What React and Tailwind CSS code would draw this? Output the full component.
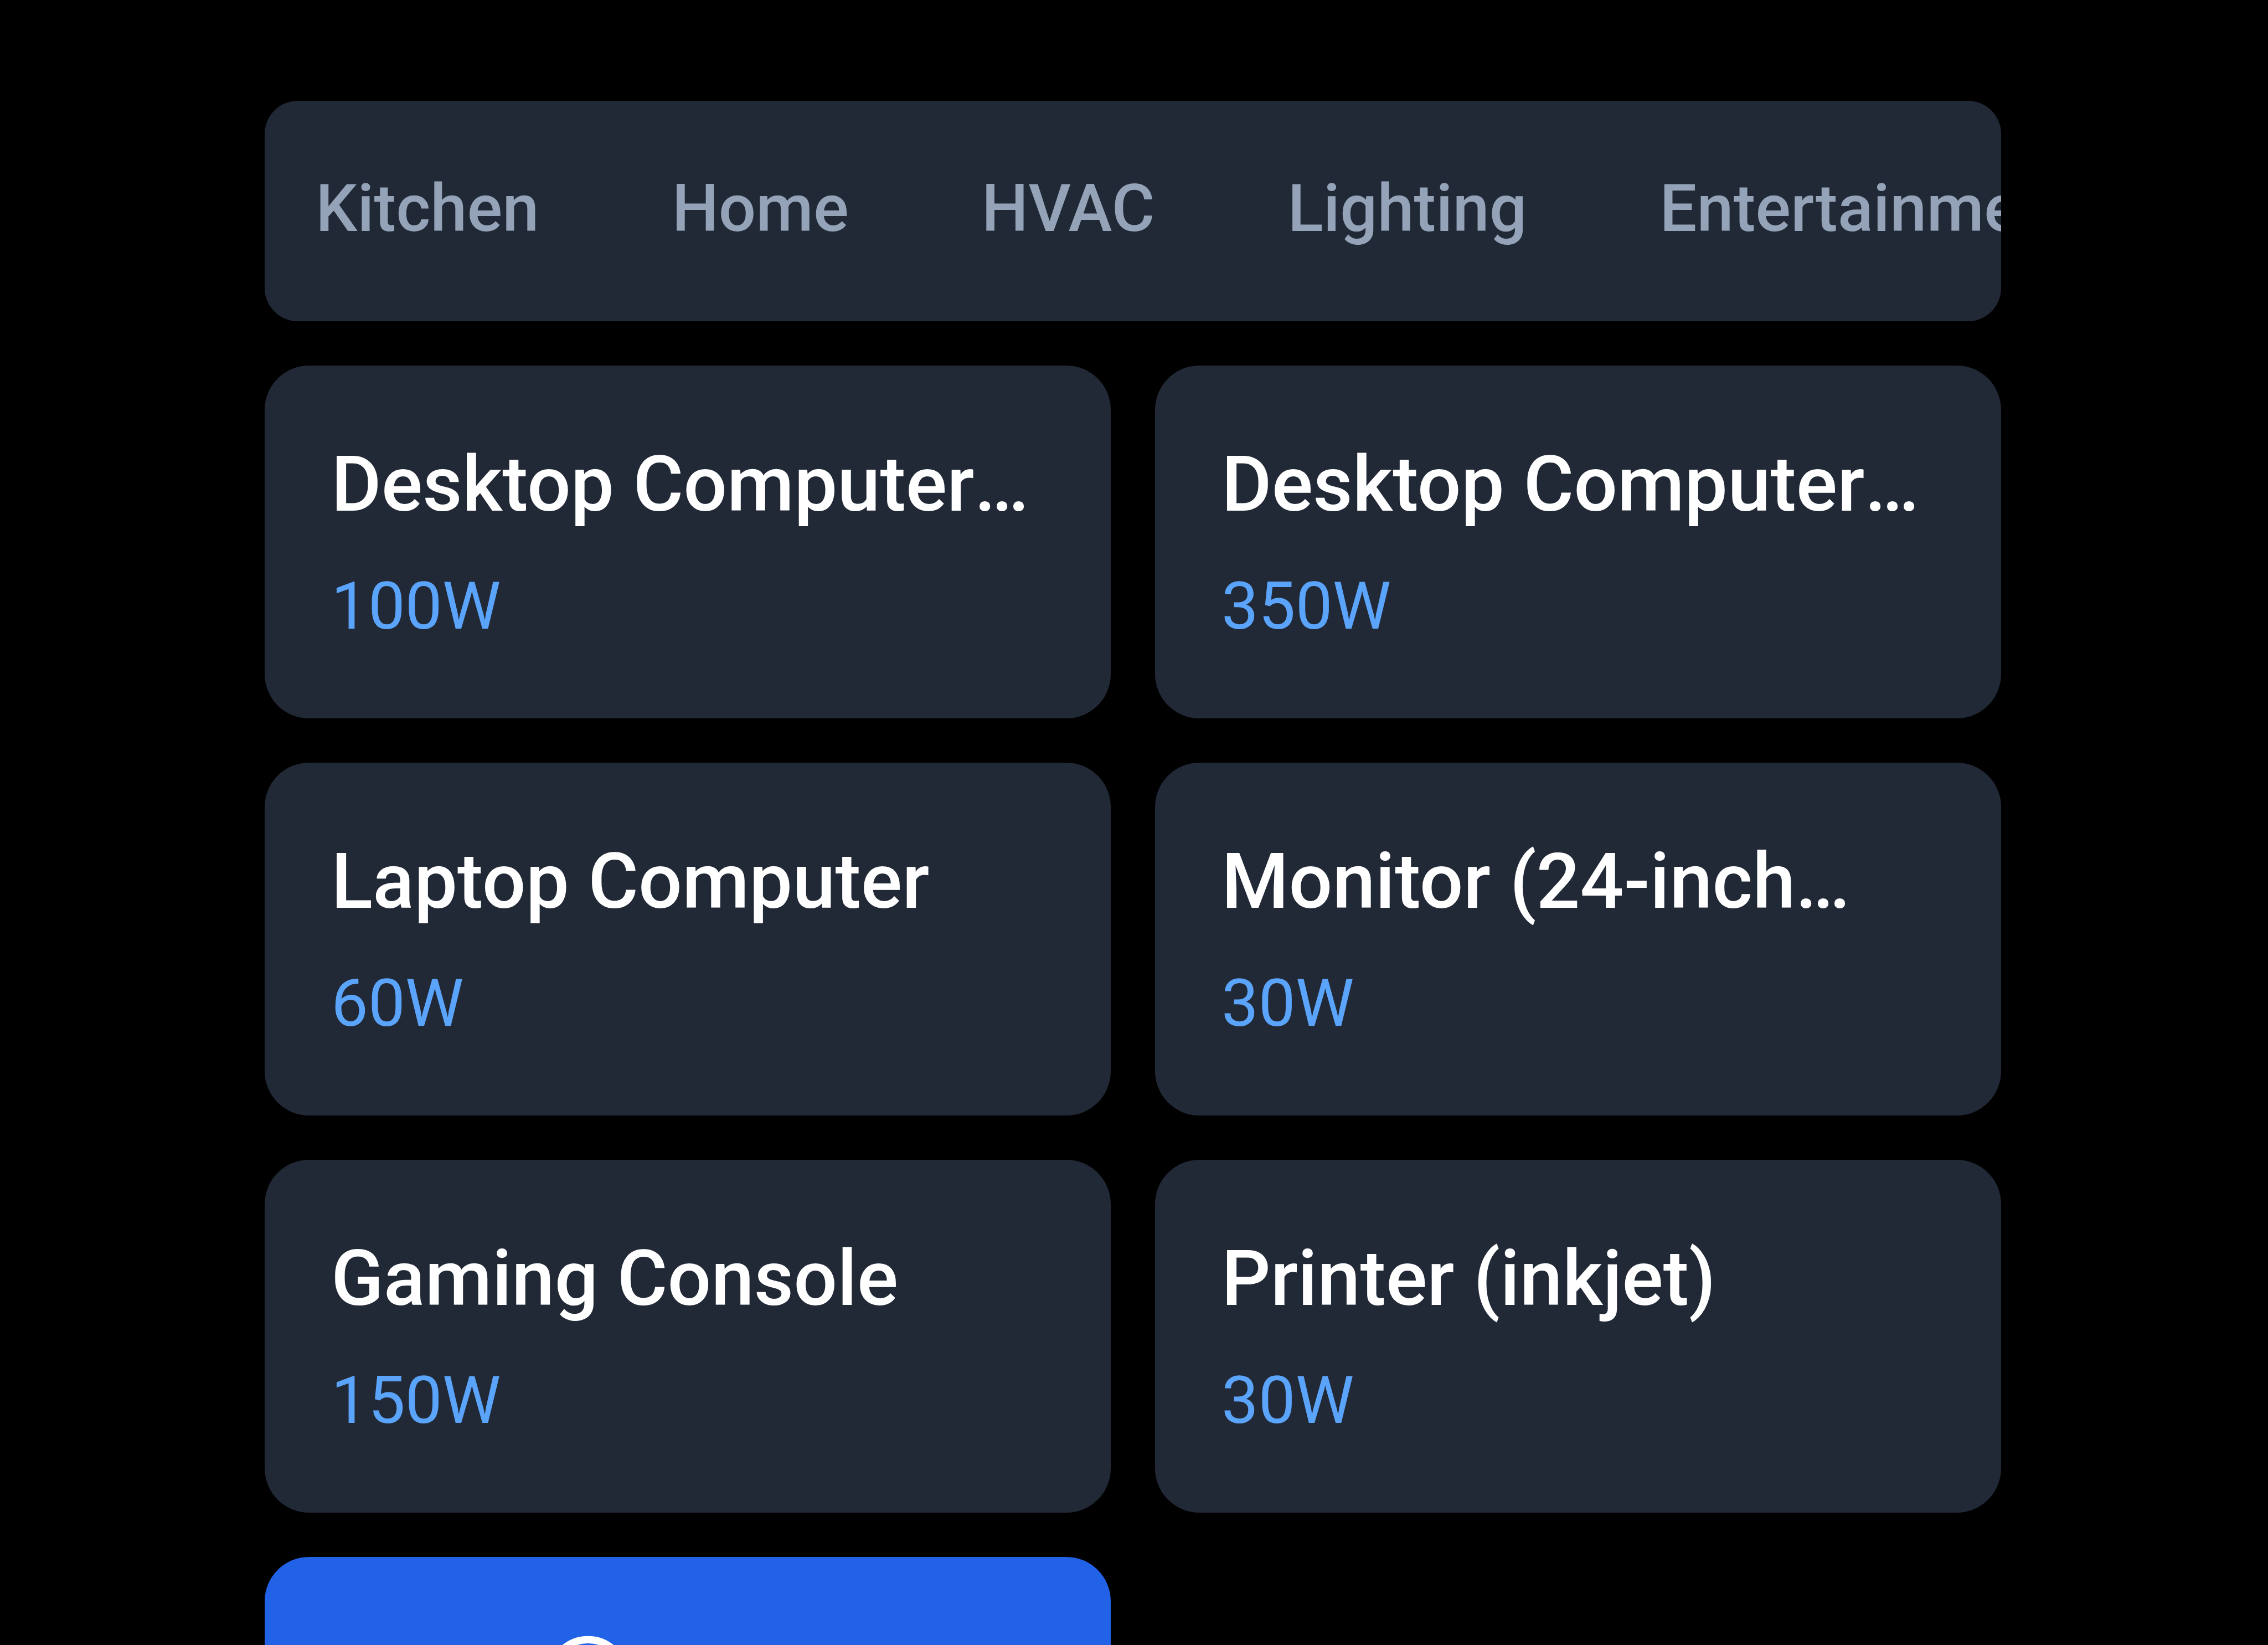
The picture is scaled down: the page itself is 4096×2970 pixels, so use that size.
import { CirclePlus } from "lucide-react";

const tabs = ["Kitchen", "Home", "HVAC", "Lighting", "Entertainment"];

const appliances = [
  { name: "Desktop Computer", shortened: true, watts: 100 },
  { name: "Desktop Computer", shortened: true, watts: 350 },
  { name: "Laptop Computer", watts: 60 },
  { name: "Monitor (24-inch", shortened: true, watts: 30 },
  { name: "Gaming Console", watts: 150 },
  { name: "Printer (inkjet)", watts: 30 },
];

function CategoryTabs() {
  return (
    <nav className="flex overflow-x-auto overflow-y-hidden rounded-[60px] bg-[#222936] pt-[115px] pb-[123px] pl-[92px] [scrollbar-width:none]">
      <div className="flex gap-60">
        {tabs.map((tab) => (
          <button
            key={tab}
            type="button"
            className="shrink-0 whitespace-nowrap text-[119px] font-medium leading-[160px] text-[#94a3b8]"
          >
            {tab}
          </button>
        ))}
      </div>
    </nav>
  );
}

function ApplianceCard({ name, shortened, watts }) {
  return (
    <button
      type="button"
      className="flex min-w-0 flex-col items-start rounded-[80px] bg-[#222936] px-30 pt-[115px] pb-[122px] text-left"
    >
      <span className="max-w-full whitespace-nowrap text-[139px] font-medium leading-[200px] text-white">
        {name}
        {shortened && <span className="inline-block">…</span>}
      </span>
      <span className="mt-10 text-[119px] leading-[160px] text-[#5ba4fc]">{watts}W</span>
    </button>
  );
}

export default function App() {
  return (
    <main className="h-screen overflow-hidden bg-black pt-[182px] pr-[11.77%] pl-[11.67%] font-['Roboto',sans-serif]">
      <CategoryTabs />
      <section className="mt-20 grid grid-cols-2 gap-20">
        {appliances.map((item, i) => (
          <ApplianceCard key={i} {...item} />
        ))}
        <button
          type="button"
          className="flex rounded-[80px] bg-[#2262e7] py-[136px] pl-[504px] text-white"
        >
          <CirclePlus className="size-40" />
        </button>
      </section>
    </main>
  );
}
